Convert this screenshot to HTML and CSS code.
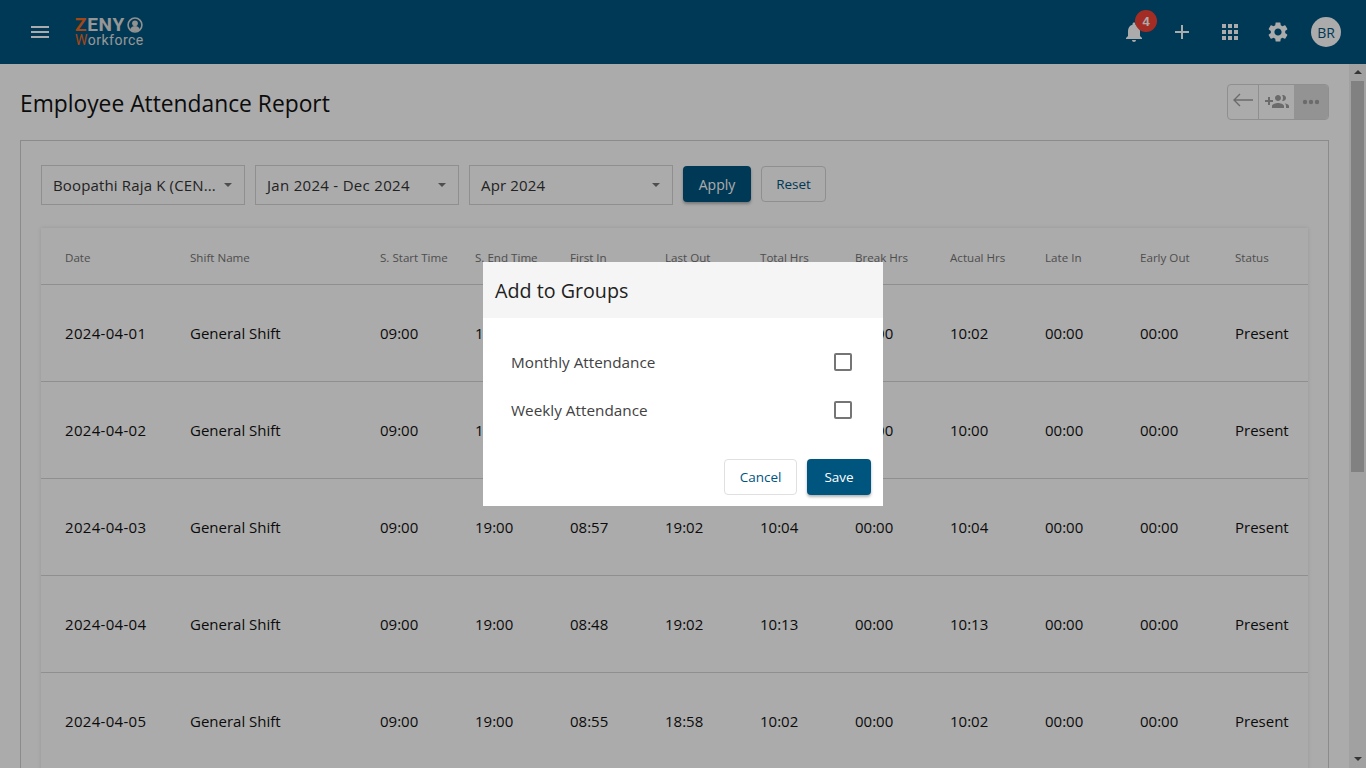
FILE: index.html
```html
<!DOCTYPE html>
<html>
<head>
	<meta charset="utf-8">
	<meta name="viewport" content="width=device-width, initial-scale=1">
	<title>Employee Attendance Report</title>
	<link rel="stylesheet" href="styles.css">
</head>
<body>

<header class="topbar">
	<div class="topbar-left">
		<svg class="menu-icon" width="24" height="24" viewBox="0 0 24 24"><path d="M3 18h18v-2H3zm0-5h18v-2H3zm0-7v2h18V6z" fill="#fff"/></svg>
		<div class="logo">
			<div class="logo-top"><div class="logo-name"><span class="orange">Z</span>ENY</div><svg width="16" height="16" viewBox="0 0 18 18"><circle cx="9" cy="9" r="7.800" fill="none" stroke="#d8d8d8" stroke-width="1.800"/><circle cx="9" cy="7" r="3.200" fill="#d8d8d8"/><path d="M3.500 14c1-3 3-4 5.500-4s4.500 1 5.500 4c-1.500 1.500-3.500 2-5.500 2s-4-.5-5.500-2z" fill="#d8d8d8"/></svg></div>
			<div class="logo-bottom"><span class="orange">W</span>orkforce</div>
		</div>
	</div>
	<div class="topbar-right">
		<div class="bell">
			<svg width="24" height="24" viewBox="0 0 24 24"><path d="M12 22c1.100 0 2-.9 2-2h-4c0 1.100.9 2 2 2zm6-6v-5c0-3.070-1.630-5.640-4.500-6.320V4c0-.83-.67-1.500-1.500-1.500s-1.500.67-1.500 1.500v.68C7.640 5.360 6 7.920 6 11v5l-2 2v1h16v-1z" fill="#fff"/></svg>
			<span class="badge">4</span>
		</div>
		<svg width="24" height="24" viewBox="0 0 24 24"><path d="M19 13h-6v6h-2v-6H5v-2h6V5h2v6h6z" fill="#fff"/></svg>
		<svg width="24" height="24" viewBox="0 0 24 24"><path d="M4 8h4V4H4zm6 12h4v-4h-4zm-6 0h4v-4H4zm0-6h4v-4H4zm6 0h4v-4h-4zm6-10v4h4V4zm-6 4h4V4h-4zm6 6h4v-4h-4zm0 6h4v-4h-4z" fill="#fff"/></svg>
		<svg width="24" height="24" viewBox="0 0 24 24"><path d="M19.140 12.940c.04-.3.060-.61.060-.94s-.02-.64-.07-.94l2.030-1.580a.49.49 0 0 0 .12-.61l-1.920-3.320a.488.488 0 0 0-.59-.22l-2.390.96c-.5-.38-1.030-.7-1.620-.94l-.36-2.540a.484.484 0 0 0-.48-.41h-3.840c-.24 0-.43.170-.47.410l-.36 2.540c-.59.24-1.130.57-1.620.94l-2.390-.96c-.22-.08-.47 0-.59.220L2.740 8.870c-.12.210-.08.470.12.610l2.030 1.580c-.05.300-.09.630-.09.940s.2.640.07.940l-2.030 1.580a.49.49 0 0 0-.12.610l1.920 3.320c.12.220.37.290.59.220l2.390-.96c.5.380 1.030.7 1.620.94l.36 2.540c.05.240.24.410.48.410h3.840c.24 0 .44-.17.47-.41l.36-2.540c.59-.24 1.130-.56 1.620-.94l2.390.96c.22.080.47 0 .59-.22l1.920-3.320c.12-.22.070-.47-.12-.61zM12 15.600c-1.980 0-3.600-1.620-3.600-3.600s1.620-3.600 3.600-3.600 3.600 1.620 3.600 3.600-1.620 3.600-3.600 3.600z" fill="#fff"/></svg>
		<div class="avatar">BR</div>
	</div>
</header>

<div class="main">
	<div class="content">
		<div class="page-head">
			<h1>Employee Attendance Report</h1>
			<div class="tool-group">
				<div class="tool tool-back"><svg width="24" height="24" viewBox="0 0 24 24"><path d="M22 12H3M9 6l-6 6 6 6" transform="translate(0 -2)" fill="none" stroke="#a0a0a0" stroke-width="1.400"/></svg></div>
				<div class="tool tool-people"><svg width="24" height="24" viewBox="0 0 24 24"><path d="M8 10H5V7H3v3H0v2h3v3h2v-3h3v-2zm10 1c1.660 0 2.990-1.340 2.990-3S19.660 5 18 5c-.32 0-.63.05-.91.140.57.81.9 1.790.9 2.860s-.34 2.040-.9 2.860c.28.090.59.140.91.140zm-5 0c1.660 0 2.990-1.340 2.990-3S14.660 5 13 5c-1.660 0-3 1.340-3 3s1.340 3 3 3zm6.620 2.160c.83.730 1.380 1.660 1.380 2.840v2h3v-2c0-1.540-2.370-2.490-4.380-2.840zM13 13c-2 0-6 1-6 3v2h12v-2c0-2-4-3-6-3z" fill="#a0a0a0"/></svg></div>
				<div class="tool tool-more"><svg width="24" height="24" viewBox="0 0 24 24"><circle cx="6" cy="12" r="2.200" fill="#a0a0a0"/><circle cx="12" cy="12" r="2.200" fill="#a0a0a0"/><circle cx="18" cy="12" r="2.200" fill="#a0a0a0"/></svg></div>
			</div>
		</div>

		<div class="card">
			<div class="filters">
				<div class="select"><span>Boopathi Raja K (CEN...</span><i class="caret"></i></div>
				<div class="select"><span>Jan 2024 - Dec 2024</span><i class="caret"></i></div>
				<div class="select"><span>Apr 2024</span><i class="caret"></i></div>
				<button class="btn btn-primary">Apply</button>
				<button class="btn btn-plain">Reset</button>
			</div>

			<div class="report">
				<div class="row row-head">
					<div>Date</div><div>Shift Name</div><div>S. Start Time</div><div>S. End Time</div><div>First In</div><div>Last Out</div><div>Total Hrs</div><div>Break Hrs</div><div>Actual Hrs</div><div>Late In</div><div>Early Out</div><div>Status</div>
				</div>
				<div class="row">
					<div>2024-04-01</div><div>General Shift</div><div>09:00</div><div>19:00</div><div>08:50</div><div>18:52</div><div>10:02</div><div>00:00</div><div>10:02</div><div>00:00</div><div>00:00</div><div>Present</div>
				</div>
				<div class="row">
					<div>2024-04-02</div><div>General Shift</div><div>09:00</div><div>19:00</div><div>08:55</div><div>18:55</div><div>10:00</div><div>00:00</div><div>10:00</div><div>00:00</div><div>00:00</div><div>Present</div>
				</div>
				<div class="row">
					<div>2024-04-03</div><div>General Shift</div><div>09:00</div><div>19:00</div><div>08:57</div><div>19:02</div><div>10:04</div><div>00:00</div><div>10:04</div><div>00:00</div><div>00:00</div><div>Present</div>
				</div>
				<div class="row">
					<div>2024-04-04</div><div>General Shift</div><div>09:00</div><div>19:00</div><div>08:48</div><div>19:02</div><div>10:13</div><div>00:00</div><div>10:13</div><div>00:00</div><div>00:00</div><div>Present</div>
				</div>
				<div class="row">
					<div>2024-04-05</div><div>General Shift</div><div>09:00</div><div>19:00</div><div>08:55</div><div>18:58</div><div>10:02</div><div>00:00</div><div>10:02</div><div>00:00</div><div>00:00</div><div>Present</div>
				</div>
			</div>
		</div>
	</div>

	<div class="scrollbar">
		<i class="arrow-up"></i>
		<div class="track"><div class="thumb"></div></div>
		<i class="arrow-down"></i>
	</div>
</div>

<div class="backdrop">
	<div class="dialog">
		<div class="dialog-head">Add to Groups</div>
		<div class="dialog-body">
			<label class="check-row"><span>Monthly Attendance</span><i class="check"></i></label>
			<label class="check-row"><span>Weekly Attendance</span><i class="check"></i></label>
		</div>
		<div class="dialog-foot">
			<button class="btn btn-cancel">Cancel</button>
			<button class="btn btn-save">Save</button>
		</div>
	</div>
</div>

</body>
</html>
```

FILE: styles.css
```css
* {
	box-sizing: border-box;
}

html, body {
	height: 100%;
}

body {
	margin: 0;
	height: 768px;
	overflow: hidden;
	background-color: #fff;
	color: #111;
	font-family: "Open Sans", "Noto Sans", sans-serif;
	display: flex;
	flex-direction: column;
}

.topbar {
	height: 64px;
	flex-shrink: 0;
	background-color: #00557f;
	display: flex;
	align-items: center;
	justify-content: space-between;
	padding: 0 25px 0 28px;
}

.topbar-left {
	display: flex;
	align-items: center;
	gap: 23px;
}

.menu-icon {
	display: block;
}

.logo {
	color: #e0e0e0;
	font-family: Roboto, "Liberation Sans", sans-serif;
	line-height: 1;
}

.logo-top {
	display: flex;
	align-items: center;
	gap: 2px;
	height: 15px;
}

.logo-name {
	font-size: 19px;
	font-weight: bold;
	letter-spacing: 0.7px;
	line-height: 15px;
}

.logo-bottom {
	font-size: 14px;
	letter-spacing: 0.5px;
	margin-top: 1px;
}

.orange {
	color: #f26a21;
}

.topbar-right {
	display: flex;
	align-items: center;
	gap: 24px;
}

.topbar-right svg {
	display: block;
}

.bell {
	position: relative;
}

.badge {
	position: absolute;
	top: -10px;
	left: 13px;
	width: 22px;
	height: 22px;
	border-radius: 50%;
	background-color: #f44336;
	color: #fff;
	font-family: "Liberation Sans", sans-serif;
	font-size: 13px;
	font-weight: bold;
	display: flex;
	align-items: center;
	justify-content: center;
}

.avatar {
	width: 30px;
	height: 30px;
	margin-left: -3px;
	border-radius: 50%;
	background-color: #fff;
	color: #00557f;
	font-size: 14px;
	display: flex;
	align-items: center;
	justify-content: center;
}

.main {
	flex: 1;
	min-height: 0;
	display: flex;
}

.content {
	flex: 1;
	min-width: 0;
	padding: 20px 20px 0;
	overflow: hidden;
}

.page-head {
	height: 36px;
	display: flex;
	align-items: center;
	justify-content: space-between;
	margin-bottom: 20px;
}

h1 {
	margin: 2px 0 0;
	font-size: 22.8px;
	font-weight: 400;
}

.tool-group {
	width: 102px;
	height: 36px;
	display: flex;
	border: 1px solid #d5d5d5;
	border-radius: 4px;
	overflow: hidden;
}

.tool {
	display: flex;
	align-items: center;
	justify-content: center;
}

.tool-back {
	width: 31px;
	border-right: 1px solid #d5d5d5;
}

.tool-people {
	width: 35px;
}

.tool-more {
	flex: 1;
	background-color: #dcdcdc;
}

.card {
	border: 1px solid #d0d0d0;
	padding: 24px 20px 0;
	height: 700px;
}

.filters {
	display: flex;
	align-items: center;
	gap: 10px;
	margin-bottom: 23px;
}

.select {
	width: 204px;
	height: 40px;
	border: 1px solid #d5d5d5;
	padding: 0 12px 0 11px;
	display: flex;
	align-items: center;
	justify-content: space-between;
	font-size: 15px;
	letter-spacing: 0.15px;
	color: #333;
}

.select:nth-child(2) {
	letter-spacing: 0.3px;
}

.caret {
	width: 0;
	height: 0;
	border-left: 4px solid transparent;
	border-right: 4px solid transparent;
	border-top: 4px solid #757575;
}

.btn {
	font-family: inherit;
	font-size: 13.5px;
	border-radius: 4px;
	cursor: pointer;
}

.btn-primary {
	width: 68px;
	height: 36px;
	margin-bottom: 2px;
	border: 0;
	background-color: #00557f;
	color: #fff;
	font-size: 14px;
	box-shadow: 0 2px 3px rgba(0, 0, 0, 0.3);
}

.btn-plain {
	width: 65px;
	height: 36px;
	margin-bottom: 2px;
	border: 1px solid #d5d5d5;
	background-color: transparent;
	color: #00557f;
}

.report {
	background-color: #fff;
	box-shadow: 0 0 4px rgba(0, 0, 0, 0.12);
}

.row {
	display: grid;
	grid-template-columns: 125px 190px repeat(10, 95px);
	height: 97px;
	padding-left: 24px;
	align-items: center;
	font-size: 15px;
	border-bottom: 1px solid #d5d5d5;
}

.row > div:first-child {
	letter-spacing: 0.3px;
}

.row-head {
	height: 57px;
	padding-top: 2px;
	font-size: 11.6px;
	color: #757575;
}

.row-head > div:first-child {
	letter-spacing: 0;
}

.scrollbar {
	width: 17px;
	flex-shrink: 0;
	background-color: #f1f1f1;
	display: flex;
	flex-direction: column;
	align-items: center;
}

.arrow-up, .arrow-down {
	width: 0;
	height: 0;
	border-left: 4px solid transparent;
	border-right: 4px solid transparent;
}

.arrow-up {
	margin: 6px 0 7px;
	border-bottom: 4px solid #505050;
}

.arrow-down {
	margin: 6px 0 7px;
	border-top: 4px solid #505050;
}

.track {
	flex: 1;
	width: 100%;
	padding: 0 2px;
}

.thumb {
	width: 100%;
	height: 391px;
	background-color: #c1c1c1;
}

.backdrop {
	position: fixed;
	top: 0;
	left: 0;
	right: 0;
	bottom: 0;
	background-color: rgba(0, 0, 0, 0.33);
	display: flex;
	align-items: flex-start;
	justify-content: center;
	padding-top: 262px;
}

.dialog {
	width: 400px;
	height: 244px;
	background-color: #fff;
	display: flex;
	flex-direction: column;
}

.dialog-head {
	height: 56px;
	background-color: #f5f5f5;
	padding: 0 12px;
	display: flex;
	align-items: center;
	font-size: 19.7px;
	color: #212121;
}

.dialog-body {
	padding: 20px 28px 0;
	flex: 1;
}

.check-row {
	height: 48px;
	display: flex;
	align-items: center;
	justify-content: space-between;
	font-size: 15.3px;
	color: #424242;
}

.check {
	width: 18px;
	height: 18px;
	border: 2px solid #757575;
	border-radius: 2px;
	margin-right: 3px;
}

.dialog-foot {
	display: flex;
	justify-content: flex-end;
	gap: 10px;
	padding: 0 12px 11px;
}

.btn-cancel {
	width: 73px;
	height: 36px;
	border: 1px solid #e0e0e0;
	background-color: #fff;
	color: #00557f;
}

.btn-save {
	width: 64px;
	height: 36px;
	border: 0;
	background-color: #00557f;
	color: #fff;
	box-shadow: 0 2px 3px rgba(0, 0, 0, 0.3);
}
```
